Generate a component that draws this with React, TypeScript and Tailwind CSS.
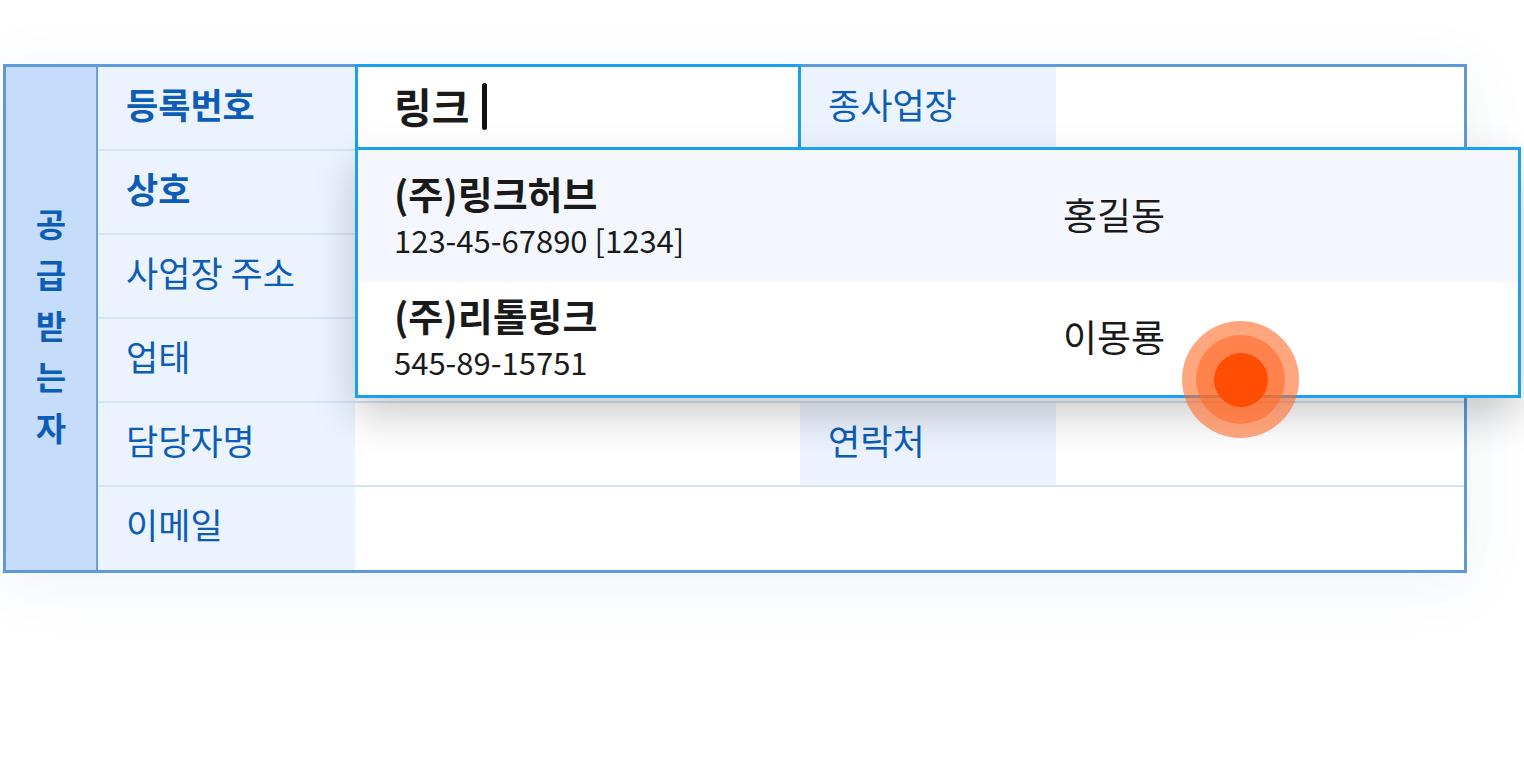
const labelCell =
  "flex h-full w-[257px] shrink-0 items-center bg-[#ebf3fe] pb-[8px] pl-[28px] text-[35px] text-[#0d5cb6]";
const labelCell2 =
  "flex h-full w-[256px] shrink-0 items-center bg-[#ebf3fe] pb-[8px] pl-[28px] text-[35px] text-[#0d5cb6]";

const rows = [
  { label: "등록번호", bold: true, side: "종사업장" },
  { label: "상호", bold: true },
  { label: "사업장 주소" },
  { label: "업태" },
  { label: "담당자명", side: "연락처" },
  { label: "이메일", last: true },
];

const suggestions = [
  { name: "(주)링크허브", num: "123-45-67890 [1234]", person: "홍길동", tint: true },
  { name: "(주)리톨링크", num: "545-89-15751", person: "이몽룡" },
];

function TapMarker() {
  return (
    <div className="pointer-events-none absolute left-[1182px] top-[321px] flex h-[117px] w-[117px] items-center justify-center rounded-full bg-[#ff6a2a]/60">
      <div className="flex h-[89px] w-[89px] items-center justify-center rounded-full bg-[#ff6a2a]/60">
        <div className="h-[54px] w-[54px] rounded-full bg-[#ff4a00]/95" />
      </div>
    </div>
  );
}

export default function App() {
  return (
    <div className="relative h-[780px] w-[1524px] overflow-hidden bg-white font-['Noto_Sans_CJK_KR','Noto_Sans',sans-serif]">
      <div className="relative ml-[3px] mt-[64px] flex h-[509px] w-[1464px] border-[3px] border-[#5e9ad9] bg-white shadow-[0_10px_60px_rgba(40,90,170,0.08)]">
        {/* 세로 제목 */}
        <div className="flex w-[92px] shrink-0 flex-col items-center justify-center border-r-2 border-[#6b9fdc] bg-[#c6dcfb] pt-[14px] text-[33px] font-bold leading-[51px] text-[#0d5cb6]">
          {"공급받는자".split("").map((c) => (
            <span key={c}>{c}</span>
          ))}
        </div>

        <div className="flex flex-1 flex-col">
          {rows.map((r) => (
            <div
              key={r.label}
              className={`flex ${r.last ? "flex-1" : "h-[84px] border-b-2 border-[#d3e2f5]"}`}
            >
              <div className={`${labelCell} ${r.bold ? "font-bold" : ""}`}>{r.label}</div>
              {r.side ? (
                <>
                  <div className="w-[445px] shrink-0 bg-white" />
                  <div className={labelCell2}>{r.side}</div>
                  <div className="flex-1 bg-white" />
                </>
              ) : (
                <div className="flex-1 bg-white" />
              )}
            </div>
          ))}
        </div>

        {/* 입력 중인 칸 */}
        <div className="absolute left-[349px] top-[-3px] flex h-[86px] w-[446px] items-center border-[3px] border-[#1aa0ec] bg-white pb-[2px] pl-[36px]">
          <span className="text-[41px] font-bold text-[#1a1a1a]">링크</span>
          <span className="ml-[13px] h-[47px] w-[5px] rounded-full bg-[#111]" />
        </div>

        {/* 자동완성 목록 */}
        <div className="absolute left-[349px] top-[80px] flex h-[251px] w-[1166px] flex-col border-[3px] border-[#1aa0ec] bg-white shadow-[0_18px_40px_rgba(0,0,0,0.2)]">
          {suggestions.map((s) => (
            <div
              key={s.name}
              className={`flex items-center pb-[3px] pl-[36px] ${s.tint ? "h-[132px] bg-[#f4f8fe]" : "flex-1 bg-white"}`}
            >
              <div className="w-[669px] shrink-0">
                <div className="text-[38px] font-bold leading-[50px] text-[#1a1a1a]">{s.name}</div>
                <div className="text-[31px] leading-[44px] text-[#1a1a1a]">{s.num}</div>
              </div>
              <div className="text-[37px] text-[#1a1a1a]">{s.person}</div>
            </div>
          ))}
        </div>
      </div>

      <TapMarker />
    </div>
  );
}
